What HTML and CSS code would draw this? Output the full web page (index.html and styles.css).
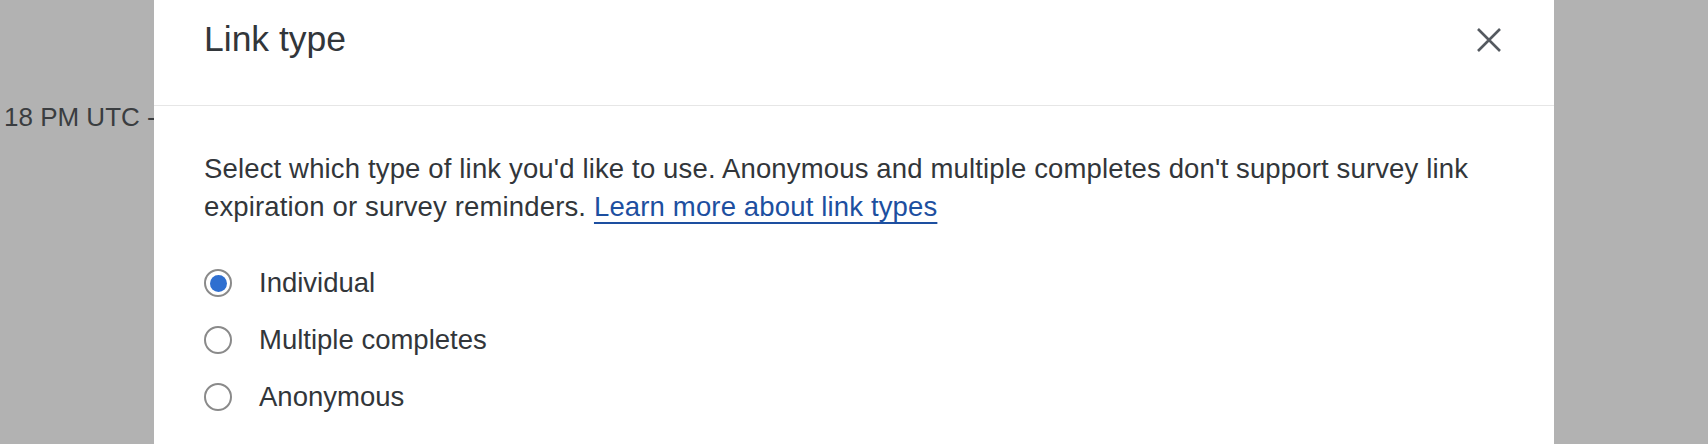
FILE: index.html
```html
<!DOCTYPE html>
<html>
<head>
    <meta charset="UTF-8">
    <title>Link type</title>
    <link rel="stylesheet" href="styles.css">
</head>
<body>
    <div class="page-behind">
        <div class="behind-text">18 PM UTC -</div>
    </div>

    <div class="modal-overlay">
        <div class="modal">
            <div class="modal-header">
                <div class="modal-title">Link type</div>
                <button class="close-btn" aria-label="Close">
                    <svg width="26" height="26" viewBox="0 0 26 26">
                        <path d="M2 2 L24 24 M24 2 L2 24" stroke="#555a60" stroke-width="2.6" fill="none"/>
                    </svg>
                </button>
            </div>

            <div class="modal-body">
                <p class="description">
                    Select which type of link you'd like to use. Anonymous and multiple completes don't support survey link
                    expiration or survey reminders. <a href="#" class="learn-link">Learn more about link types</a>
                </p>

                <div class="radio-list">
                    <label class="radio-item">
                        <span class="radio checked"></span>
                        <span class="radio-label">Individual</span>
                    </label>
                    <label class="radio-item">
                        <span class="radio"></span>
                        <span class="radio-label">Multiple completes</span>
                    </label>
                    <label class="radio-item">
                        <span class="radio"></span>
                        <span class="radio-label">Anonymous</span>
                    </label>
                </div>
            </div>
        </div>
    </div>
</body>
</html>
```

FILE: styles.css
```css
body {
    font-family: 'Liberation Sans', Arial, sans-serif;
    margin: 0;
    padding: 0;
    background-color: #b2b2b2;
    color: #32363a;
    overflow: hidden;
    height: 444px;
}
.page-behind {
    padding: 102px 0 0 4px;
}
.behind-text {
    font-size: 26px;
    color: #3a3d40;
    white-space: nowrap;
}
.modal-overlay {
    position: fixed;
    top: 0;
    left: 0;
    right: 0;
    bottom: 0;
    display: flex;
    justify-content: center;
}
.modal {
    width: 1400px;
    background-color: #fff;
    height: 100%;
}
.modal-header {
    height: 106px;
    display: flex;
    justify-content: space-between;
    align-items: flex-start;
    padding: 0 52px 0 50px;
    border-bottom: 1px solid #e6e6e6;
    box-sizing: border-box;
}
.modal-title {
    font-size: 35.5px;
    padding-top: 19px;
    color: #32363a;
}
.close-btn {
    background: none;
    border: none;
    padding: 0;
    margin-top: 27px;
    cursor: pointer;
    line-height: 0;
}
.modal-body {
    padding: 0 50px;
}
.description {
    margin: 0;
    padding-top: 44px;
    font-size: 27.5px;
    line-height: 38px;
    letter-spacing: 0.15px;
    color: #32363a;
}
.learn-link {
    color: #1d4fa0;
    text-decoration: underline;
    text-underline-offset: 6px;
}
.radio-list {
    display: flex;
    flex-direction: column;
    gap: 25px;
    padding-top: 41px;
}
.radio-item {
    display: flex;
    align-items: center;
    gap: 27px;
    font-size: 27.5px;
    line-height: 32px;
    cursor: pointer;
}
.radio {
    width: 28px;
    height: 28px;
    border: 2px solid #8a8a8a;
    border-radius: 50%;
    box-sizing: border-box;
    display: flex;
    align-items: center;
    justify-content: center;
    flex-shrink: 0;
}
.radio.checked::after {
    content: "";
    width: 17px;
    height: 17px;
    border-radius: 50%;
    background-color: #2f6fd0;
}
```
